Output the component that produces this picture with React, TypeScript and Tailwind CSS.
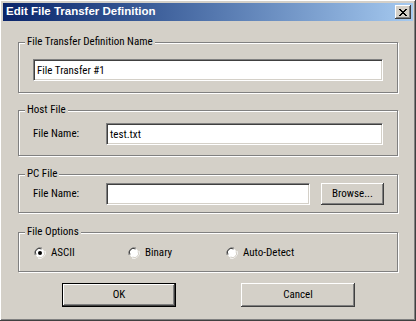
import React from 'react';

const raised =
  'shadow-[inset_-1px_-1px_#404040,inset_1px_1px_#ffffff,inset_-2px_-2px_#808080,inset_2px_2px_#d4d0c8]';
const sunken =
  'border border-t-[#808080] border-l-[#808080] border-b-white border-r-white shadow-[inset_1px_1px_#404040,inset_-1px_-1px_#d4d0c8]';

const xRows = ['11000011', '01100110', '00111100', '00011000', '00111100', '01100110', '11000011'];

function Group({ title, className, children }: { title: string; className: string; children: React.ReactNode }) {
  return (
    <div
      className={`relative border border-[#808080] shadow-[1px_1px_0_#ffffff,inset_1px_1px_0_#ffffff] ${className}`}
    >
      <span className="absolute -top-[8px] left-[6px] bg-[#d4d0c8] px-[2px] leading-[14px]">{title}</span>
      {children}
    </div>
  );
}

function TextBox({ value, className }: { value: string; className: string }) {
  return (
    <div className={`flex h-[22px] items-center bg-white pl-[3px] ${sunken} ${className}`}>
      <span className="leading-none">{value}</span>
    </div>
  );
}

function Radio({ label, checked }: { label: string; checked?: boolean }) {
  return (
    <div className="flex items-center gap-[5px]">
      <svg width="12" height="12" viewBox="0 0 12 12">
        <path d="M1 8 A5.5 5.5 0 0 1 8 1" fill="none" stroke="#808080" strokeWidth="1" />
        <path d="M4 11 A5.5 5.5 0 0 0 11 4" fill="none" stroke="#ffffff" strokeWidth="1" />
        <circle cx="6" cy="6" r="4.5" fill="#ffffff" />
        <path d="M2 7.5 A4 4 0 0 1 7.5 2" fill="none" stroke="#404040" strokeWidth="1" />
        <path d="M4.5 10 A4 4 0 0 0 10 4.5" fill="none" stroke="#d4d0c8" strokeWidth="1" />
        {checked && <circle cx="6" cy="6" r="2" fill="#000000" />}
      </svg>
      <span>{label}</span>
    </div>
  );
}

export default function App() {
  return (
    <div
      className={`flex h-[321px] w-[416px] flex-col bg-[#d4d0c8] p-[3px] text-[11px] font-normal text-black [font-stretch:80%] ${raised}`}
      style={{ fontFamily: 'Roboto, "Liberation Sans", Arial, sans-serif' }}
    >
      <div className="flex h-[18px] items-center justify-between bg-gradient-to-r from-[#0a246a] to-[#a6caf0] pl-[3px] pr-[2px]">
        <span className="font-['Liberation_Sans',Arial,sans-serif] text-[11.5px] font-bold text-white [font-stretch:100%]">
          Edit File Transfer Definition
        </span>
        <div className={`flex h-[14px] w-[16px] items-center justify-center bg-[#d4d0c8] ${raised}`}>
          <svg width="8" height="7" viewBox="0 0 8 7" shapeRendering="crispEdges">
            {xRows.map((row, y) =>
              row.split('').map((c, x) => (c === '1' ? <rect key={`${x}-${y}`} x={x} y={y} width="1" height="1" fill="#000" /> : null))
            )}
          </svg>
        </div>
      </div>

      <div className="flex flex-col px-[15px]">
        <Group title="File Transfer Definition Name" className="mt-[21px] h-[51px] px-[14px] pt-[16px]">
          <TextBox value="File Transfer #1" className="w-full" />
        </Group>

        <Group title="Host File" className="mt-[17px] flex h-[46px] items-center pr-[14px] pl-[14px] pt-[2px]">
          <span className="w-[73px]">File Name:</span>
          <TextBox value="test.txt" className="flex-1" />
        </Group>

        <Group title="PC File" className="mt-[18px] flex h-[39px] items-center pr-[13px] pl-[14px] pt-[1px]">
          <span className="w-[73px]">File Name:</span>
          <TextBox value="" className="w-[204px]" />
          <div className={`ml-[11px] flex h-[22px] flex-1 items-center justify-center ${raised}`}>Browse...</div>
        </Group>

        <Group title="File Options" className="mt-[19px] flex h-[40px] items-center pl-[15px] pt-[2px]">
          <div className="w-[94px]">
            <Radio label="ASCII" checked />
          </div>
          <div className="w-[98px]">
            <Radio label="Binary" />
          </div>
          <Radio label="Auto-Detect" />
        </Group>

        <div className="mt-[11px] flex pl-[44px]">
          <div className="h-[24px] w-[114px] border border-black">
            <div className={`flex h-full items-center justify-center ${raised}`}>OK</div>
          </div>
          <div className={`ml-[65px] flex h-[24px] w-[114px] items-center justify-center ${raised}`}>Cancel</div>
        </div>
      </div>
    </div>
  );
}
